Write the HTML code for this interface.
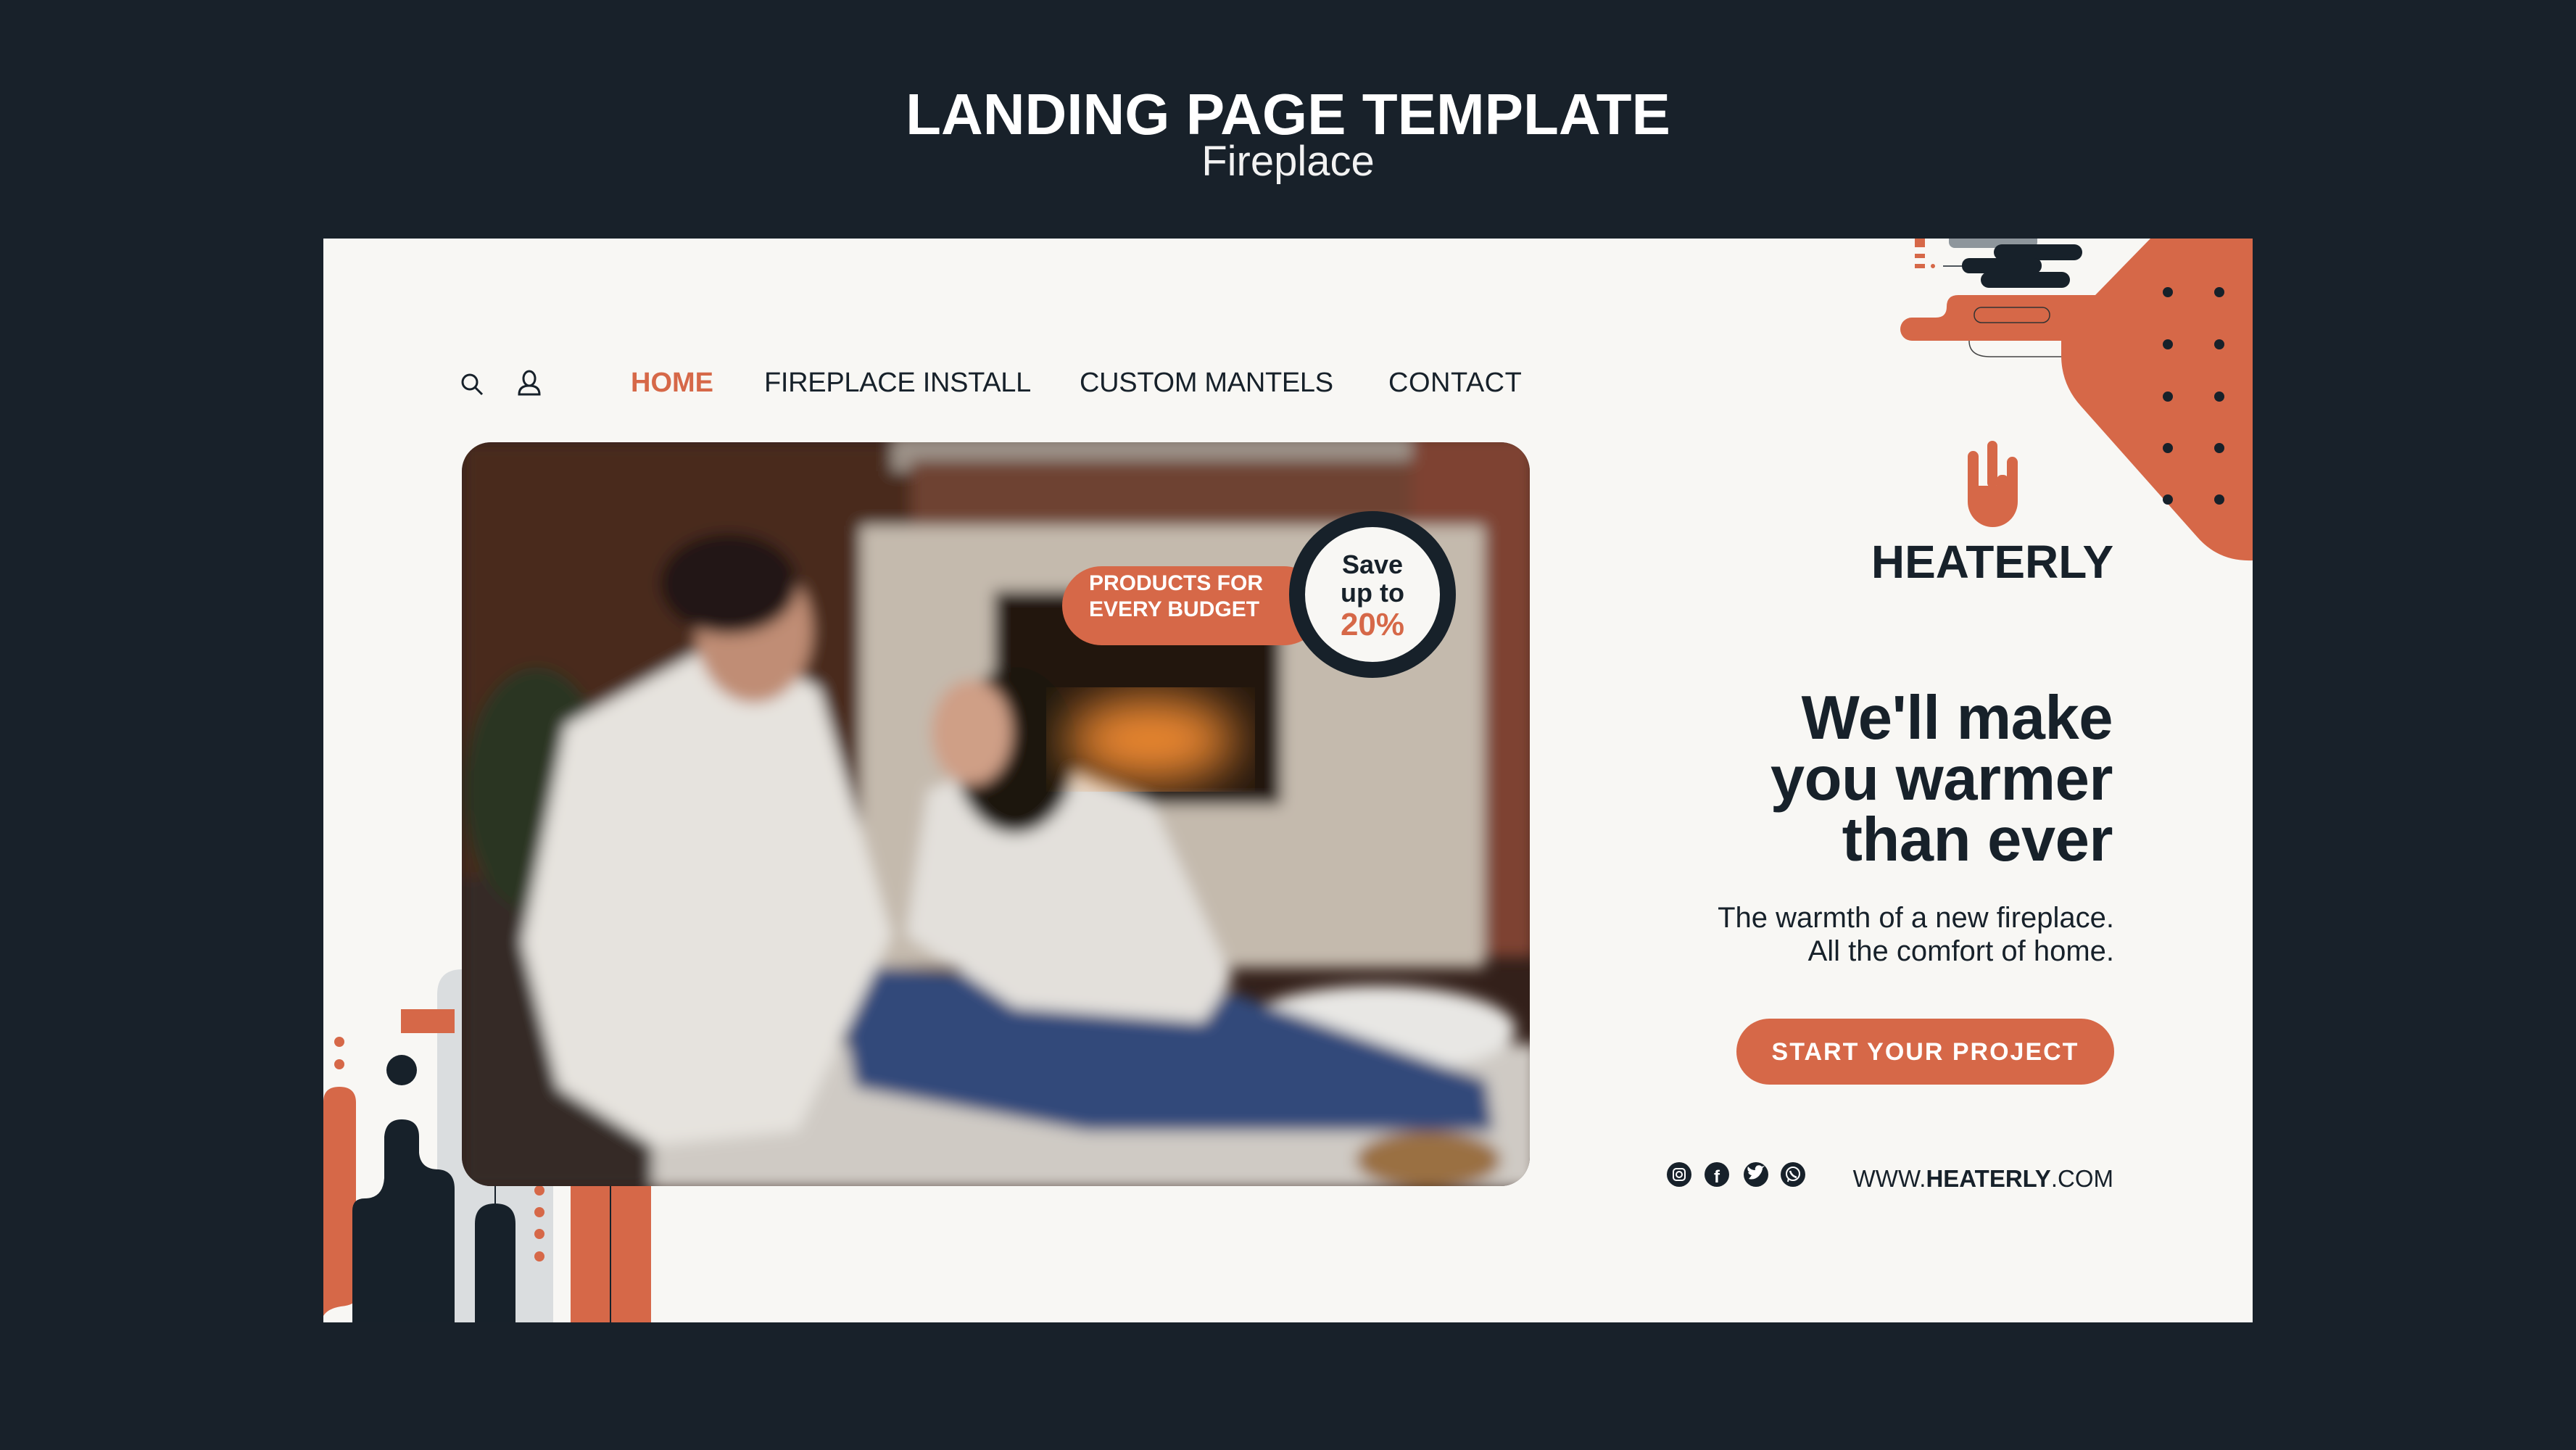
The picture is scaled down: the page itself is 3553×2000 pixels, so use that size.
<!DOCTYPE html>
<html><head><meta charset="utf-8"><style>
*{margin:0;padding:0;box-sizing:border-box}
html,body{width:3553px;height:2000px;overflow:hidden;background:#18212a;font-family:"Liberation Sans",sans-serif}
svg.main{position:absolute;left:0;top:0}
.t{position:absolute;white-space:nowrap}
.nav{top:509px;font-size:38px;line-height:38px;color:#17212a}
</style></head><body>
<svg class="main" width="3553" height="2000" viewBox="0 0 3553 2000">
<defs>
<clipPath id="card"><rect x="446" y="329" width="2661" height="1495"/></clipPath>
<clipPath id="ph"><rect x="637" y="610" width="1473" height="1026" rx="40"/></clipPath>
<filter id="bl" x="-10%" y="-10%" width="120%" height="120%"><feGaussianBlur stdDeviation="10"/></filter>
<filter id="bl2"><feGaussianBlur stdDeviation="35"/></filter>
</defs>
<rect x="446" y="329" width="2661" height="1495" fill="#f8f7f4"/>
<g clip-path="url(#card)">
<path d="M603,1825 V1372 Q603,1337 638,1337 H763 V1825 Z" fill="#dadddf"/>
<rect x="553" y="1392" width="74" height="33" fill="#d66848"/>
<circle cx="468" cy="1437" r="7" fill="#d66848"/>
<circle cx="468" cy="1468" r="7" fill="#d66848"/>
<circle cx="554" cy="1476" r="21" fill="#17212a"/>
<path d="M446,1520 Q446,1499 468,1499 Q491,1499 491,1521 V1790 Q491,1800 470,1802 Q452,1805 446,1815 Z" fill="#d66848"/>
<path d="M486,1825 V1670 Q486,1653 503,1653 Q528,1653 530,1625 V1568 Q532,1544 554,1544 Q578,1544 578,1568 V1590 Q580,1613 605,1613 Q627,1615 627,1640 V1825 Z" fill="#17212a"/>
<path d="M655,1825 V1688 Q655,1660 683,1660 Q711,1660 711,1688 V1825 Z" fill="#17212a"/>
<rect x="682" y="1636" width="2" height="26" fill="#17212a"/>
<circle cx="744" cy="1642" r="7" fill="#d66848"/>
<circle cx="744" cy="1672" r="7" fill="#d66848"/>
<circle cx="744" cy="1702" r="7" fill="#d66848"/>
<circle cx="744" cy="1733" r="7" fill="#d66848"/>
<rect x="787" y="1636" width="54" height="189" fill="#d66848"/>
<rect x="843" y="1636" width="55" height="189" fill="#d66848"/>
<rect x="841" y="1636" width="2" height="189" fill="#17212a"/>
<rect x="2688" y="320" width="122" height="22" rx="8" fill="#8e969c"/>
<rect x="2750" y="337" width="122" height="22" rx="11" fill="#17212a"/>
<rect x="2706" y="356" width="110" height="21" rx="10" fill="#17212a"/>
<rect x="2732" y="375" width="123" height="22" rx="11" fill="#17212a"/>
<line x1="2680" y1="367" x2="2708" y2="367" stroke="#17212a" stroke-width="1.5"/>
<rect x="2641" y="329" width="14" height="12" fill="#d66848"/>
<rect x="2641" y="350" width="14" height="6" fill="#d66848"/>
<rect x="2641" y="364" width="14" height="6" fill="#d66848"/>
<circle cx="2666" cy="367" r="3" fill="#d66848"/>
<path d="M2716,470 Q2716,492 2745,492 L2850,492" stroke="#444" stroke-width="1.5" fill="none"/>
<path d="M2966,329 L3107,329 L3107,773 Q3060,775 3030,740 L2870,560 Q2843,530 2843,490 L2843,470 L2637,470 A16,16 0 0 1 2637,438 L2670,438 Q2685,438 2685,423 Q2685,407 2701,407 L2890,407 Z" fill="#d66848"/>
<rect x="2723" y="424" width="104" height="21" rx="10" fill="none" stroke="#333" stroke-width="1.5"/>
<g fill="#17212a">
<circle cx="2990" cy="403" r="7"/><circle cx="3061" cy="403" r="7"/>
<circle cx="2990" cy="475" r="7"/><circle cx="3061" cy="475" r="7"/>
<circle cx="2990" cy="547" r="7"/><circle cx="3061" cy="547" r="7"/>
<circle cx="2990" cy="618" r="7"/><circle cx="3061" cy="618" r="7"/>
<circle cx="2990" cy="689" r="7"/><circle cx="3061" cy="689" r="7"/>
</g>
</g>
<g fill="#d66848">
<rect x="2714" y="622" width="15" height="60" rx="7.5"/>
<rect x="2741" y="608" width="14" height="65" rx="7"/>
<rect x="2768" y="630" width="15" height="50" rx="7.5"/>
<rect x="2754" y="655" width="16" height="25" rx="7"/>
<path d="M2714,670 L2783,670 L2783,692 A34.5,35 0 0 1 2714,692 Z"/>
</g>
<g clip-path="url(#ph)">
<rect x="637" y="610" width="1473" height="1026" fill="#33201a"/>
<g filter="url(#bl)">
<rect x="637" y="610" width="700" height="600" fill="#4a2a1e"/>
<rect x="1230" y="600" width="880" height="50" fill="#9c9288"/>
<rect x="1947" y="600" width="170" height="720" fill="#7e4232"/>
<rect x="1257" y="635" width="690" height="90" fill="#6e4230"/>
<rect x="1187" y="725" width="860" height="610" fill="#c4baad"/>
<rect x="1371" y="815" width="396" height="295" fill="#241611"/>
<rect x="637" y="1210" width="560" height="430" fill="#342a26"/>
<rect x="900" y="1440" width="1220" height="200" fill="#cfcac4"/>
<ellipse cx="1900" cy="1420" rx="190" ry="60" fill="#e8e7e4"/>
<ellipse cx="740" cy="1090" rx="100" ry="170" fill="#2a3420"/>
<path d="M1150,1330 L1700,1370 L2050,1490 L2060,1560 L1500,1560 L1180,1500 Z" fill="#30497a"/>
<path d="M780,1000 L1000,880 L1130,950 L1230,1290 L1100,1560 L900,1580 L770,1500 L720,1300 Z" fill="#e6e3de"/>
<ellipse cx="1040" cy="870" rx="80" ry="100" fill="#c08d74"/>
<ellipse cx="1005" cy="805" rx="95" ry="70" fill="#201814"/>
<path d="M1280,1090 L1420,1040 L1590,1110 L1700,1350 L1660,1410 L1400,1390 L1250,1290 Z" fill="#e3e0db"/>
<ellipse cx="1400" cy="1035" rx="85" ry="115" fill="#1c1411"/>
<ellipse cx="1340" cy="1010" rx="55" ry="72" fill="#cf9f86"/>
<ellipse cx="1970" cy="1600" rx="100" ry="40" fill="#9a7042"/>
</g>
<ellipse cx="1587" cy="1020" rx="120" ry="60" fill="#f08a30" filter="url(#bl2)"/>
</g>
<rect x="1465" y="781" width="360" height="109" rx="54.5" fill="#d66848"/>
<circle cx="1893" cy="820" r="104" fill="#f8f7f4" stroke="#17212a" stroke-width="22"/>
<circle cx="648" cy="527" r="10" fill="none" stroke="#17212a" stroke-width="3"/>
<line x1="655" y1="534" x2="665" y2="544" stroke="#17212a" stroke-width="3"/>
<ellipse cx="730" cy="522" rx="8" ry="10" fill="none" stroke="#17212a" stroke-width="3"/>
<path d="M716,544 Q716,532 730,532 Q744,532 744,544 Z" fill="none" stroke="#17212a" stroke-width="3"/>
<rect x="2395" y="1405" width="521" height="91" rx="45.5" fill="#d66848"/>
<g fill="#17212a"><circle cx="2316" cy="1620" r="17"/><circle cx="2368" cy="1620" r="17"/><circle cx="2422" cy="1620" r="17"/><circle cx="2473" cy="1620" r="17"/></g>
<rect x="2308" y="1612" width="16" height="16" rx="4" fill="none" stroke="#fff" stroke-width="2"/>
<circle cx="2316" cy="1620" r="4" fill="none" stroke="#fff" stroke-width="2"/>
<text x="2368" y="1631" font-family="Liberation Sans" font-weight="bold" font-size="24" fill="#fff" text-anchor="middle">f</text>
<path d="M2412,1626 Q2420,1628 2426,1622 Q2431,1616 2431,1611 L2434,1608 L2430,1609 Q2427,1606 2423,1608 Q2420,1611 2421,1614 Q2415,1614 2411,1609 Q2409,1614 2413,1617 L2411,1617 Q2413,1621 2416,1621 Q2414,1624 2412,1626 Z" fill="#fff"/>
<circle cx="2473" cy="1619" r="9" fill="none" stroke="#fff" stroke-width="2"/>
<path d="M2466,1630 L2467,1625" stroke="#fff" stroke-width="2"/>
<path d="M2469,1615 Q2471,1622 2478,1624" stroke="#fff" stroke-width="2.5" fill="none"/>
</svg>

<div class="t" style="left:0;width:3553px;text-align:center;top:118px;font-size:80px;line-height:80px;font-weight:bold;color:#fff">LANDING PAGE TEMPLATE</div>
<div class="t" style="left:0;width:3553px;text-align:center;top:194px;font-size:58px;line-height:58px;color:#f2f2f2">Fireplace</div>

<div class="t nav" style="left:870px;font-weight:bold;color:#d66848">HOME</div>
<div class="t nav" style="left:1054px;letter-spacing:-0.3px">FIREPLACE INSTALL</div>
<div class="t nav" style="left:1489px;letter-spacing:-0.3px">CUSTOM MANTELS</div>
<div class="t nav" style="left:1915px;letter-spacing:0.5px">CONTACT</div>

<div class="t" style="left:1502px;top:787px;font-size:30px;line-height:36px;font-weight:bold;color:#fff">PRODUCTS FOR<br>EVERY BUDGET</div>
<div class="t" style="left:1793px;width:200px;text-align:center;top:759px;font-size:36px;line-height:39px;font-weight:bold;color:#17212a">Save<br>up to</div>
<div class="t" style="left:1793px;width:200px;text-align:center;top:838px;font-size:44px;line-height:48px;font-weight:bold;color:#d66848">20%</div>

<div class="t" style="left:2548px;width:400px;text-align:center;top:743px;font-size:64px;line-height:64px;font-weight:bold;color:#17212a">HEATERLY</div>
<div class="t" style="right:639px;text-align:right;top:949px;font-size:85px;line-height:84px;font-weight:bold;color:#17212a;letter-spacing:-0.5px">We'll make<br>you warmer<br>than ever</div>
<div class="t" style="right:637px;text-align:right;top:1243px;font-size:40px;line-height:46px;color:#17212a">The warmth of a new fireplace.<br>All the comfort of home.</div>
<div class="t" style="left:2395px;width:521px;text-align:center;top:1432px;font-size:34px;line-height:38px;font-weight:bold;color:#fff;letter-spacing:2px">START YOUR PROJECT</div>
<div class="t" style="right:638px;text-align:right;top:1607px;font-size:33px;line-height:38px;color:#17212a">WWW.<b>HEATERLY</b>.COM</div>
</body></html>
